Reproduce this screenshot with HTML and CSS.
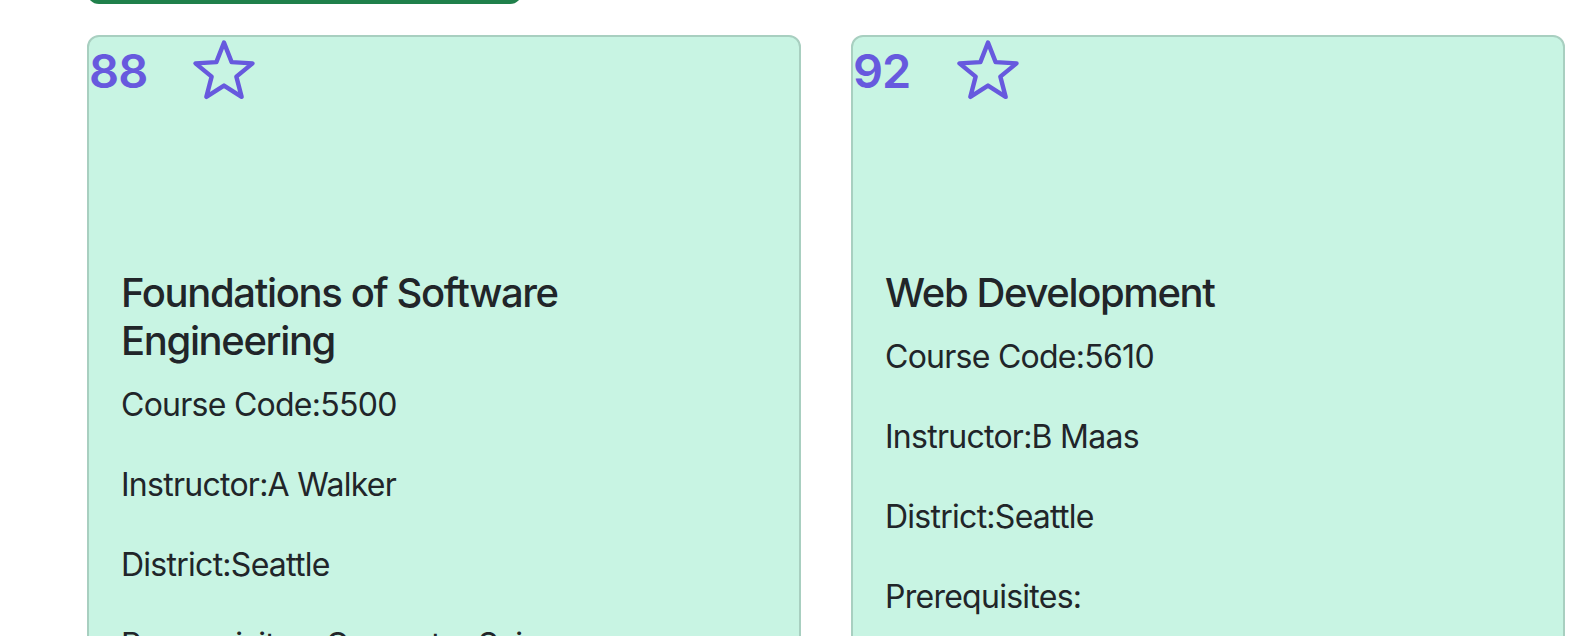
FILE: index.html
```html
<!DOCTYPE html>
<html lang="en">
<head>
<meta charset="utf-8">
<title>Courses</title>
<link rel="stylesheet" href="styles.css">
</head>
<body>
<div class="page">
  <button class="btn-success" type="button"></button>
  <div class="cards">
    <div class="card">
      <div class="card-top">
        <span class="score">88</span>
        <svg class="star" viewBox="0 0 70 64" width="70" height="64" aria-hidden="true">
          <polygon points="35,5.6 42.64,25.08 63.53,26.33 47.36,39.62 52.63,59.87 35,48.6 17.37,59.87 22.64,39.62 6.47,26.33 27.36,25.08" />
        </svg>
      </div>
      <div class="card-body">
        <h5 class="card-title">Foundations of Software Engineering</h5>
        <p class="card-text">Course Code:5500</p>
        <p class="card-text">Instructor:A Walker</p>
        <p class="card-text">District:Seattle</p>
        <p class="card-text">Prerequisites: Computer Science</p>
      </div>
    </div>
    <div class="card">
      <div class="card-top">
        <span class="score">92</span>
        <svg class="star" viewBox="0 0 70 64" width="70" height="64" aria-hidden="true">
          <polygon points="35,5.6 42.64,25.08 63.53,26.33 47.36,39.62 52.63,59.87 35,48.6 17.37,59.87 22.64,39.62 6.47,26.33 27.36,25.08" />
        </svg>
      </div>
      <div class="card-body">
        <h5 class="card-title">Web Development</h5>
        <p class="card-text">Course Code:5610</p>
        <p class="card-text">Instructor:B Maas</p>
        <p class="card-text">District:Seattle</p>
        <p class="card-text">Prerequisites:</p>
      </div>
    </div>
  </div>
</div>
</body>
</html>
```
FILE: styles.css
```css
html, body {
  margin: 0;
  padding: 0;
  overflow: hidden;
  background: #ffffff;
}

body {
  font-family: Inter, "Noto Sans", sans-serif;
  color: #212529;
}

.page {
  padding: 0 19px 0 87px;
}

.btn-success {
  display: block;
  width: 435px;
  height: 76px;
  margin-top: -72px;
  border: none;
  border-radius: 12px;
  background: #20804b;
  padding: 0;
}

.cards {
  display: grid;
  grid-template-columns: 1fr 1fr;
  column-gap: 50px;
  margin-top: 31px;
}

.card {
  background: #c8f4e3;
  border: 2px solid #a8cfc0;
  border-radius: 12px;
  height: 700px;
}

.card-top {
  display: flex;
  align-items: flex-start;
  height: 200px;
}

.score {
  width: 100px;
  font-size: 47px;
  font-weight: 600;
  letter-spacing: -0.02em;
  line-height: 58px;
  margin-top: 5px;
  color: #6759de;
}

.star {
  display: block;
  fill: none;
  stroke: #6759de;
  stroke-width: 4.4;
  stroke-linejoin: round;
}

.card-body {
  padding: 32px;
}

.card-title {
  margin: 0 0 16px;
  font-size: 40px;
  font-weight: 500;
  letter-spacing: -0.034em;
  line-height: 48px;
}

.card-text {
  margin: 0 0 32px;
  font-size: 32px;
  letter-spacing: -0.023em;
  line-height: 48px;
}
```
